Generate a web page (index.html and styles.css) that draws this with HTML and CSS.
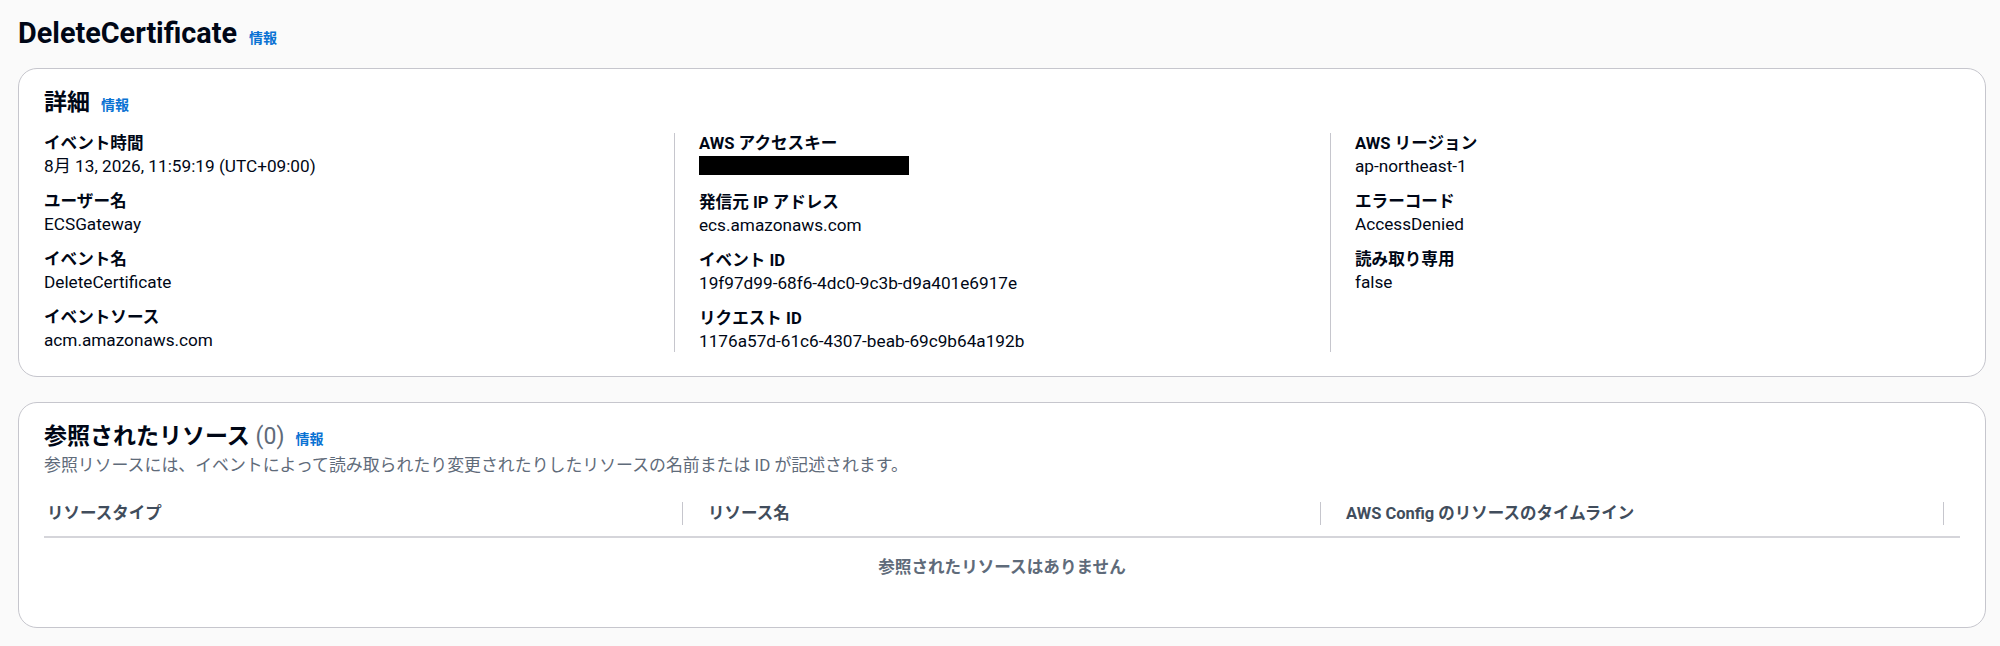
FILE: index.html
```html
<!DOCTYPE html>
<html lang="ja">
<head>
<meta charset="utf-8">
<title>DeleteCertificate</title>
<link rel="stylesheet" href="styles.css">
</head>
<body>
<div class="page">
  <div class="page-header">
    <h1 class="title">DeleteCertificate</h1>
    <a class="info" href="#">情報</a>
  </div>

  <section class="container details">
    <div class="container-header">
      <h2 class="heading">詳細</h2>
      <a class="info" href="#">情報</a>
    </div>
    <div class="columns">
      <div class="col">
        <div class="kv"><div class="label">イベント時間</div><div class="value">8月 13, 2026, 11:59:19 (UTC+09:00)</div></div>
        <div class="kv"><div class="label">ユーザー名</div><div class="value">ECSGateway</div></div>
        <div class="kv"><div class="label">イベント名</div><div class="value">DeleteCertificate</div></div>
        <div class="kv"><div class="label">イベントソース</div><div class="value">acm.amazonaws.com</div></div>
      </div>
      <div class="col divided">
        <div class="kv"><div class="label">AWS アクセスキー</div><div class="value"><span class="redacted"></span></div></div>
        <div class="kv"><div class="label">発信元 IP アドレス</div><div class="value">ecs.amazonaws.com</div></div>
        <div class="kv"><div class="label">イベント ID</div><div class="value">19f97d99-68f6-4dc0-9c3b-d9a401e6917e</div></div>
        <div class="kv"><div class="label">リクエスト ID</div><div class="value">1176a57d-61c6-4307-beab-69c9b64a192b</div></div>
      </div>
      <div class="col divided">
        <div class="kv"><div class="label">AWS リージョン</div><div class="value">ap-northeast-1</div></div>
        <div class="kv"><div class="label">エラーコード</div><div class="value">AccessDenied</div></div>
        <div class="kv"><div class="label">読み取り専用</div><div class="value">false</div></div>
      </div>
    </div>
  </section>

  <section class="container resources">
    <div class="container-header">
      <h2 class="heading">参照されたリソース <span class="count">(0)</span></h2>
      <a class="info" href="#">情報</a>
    </div>
    <p class="desc">参照リソースには、イベントによって読み取られたり変更されたりしたリソースの名前または ID が記述されます。</p>
    <div class="table">
      <div class="thead">
        <div class="th th-first">リソースタイプ</div>
        <div class="th th-mid">リソース名</div>
        <div class="th th-last">AWS Config のリソースのタイムライン</div>
      </div>
      <div class="empty">参照されたリソースはありません</div>
    </div>
  </section>
</div>
</body>
</html>
```

FILE: styles.css
```css
* { box-sizing: border-box; }

html, body {
  margin: 0;
  padding: 0;
  background: #fafafa;
}

body {
  font-family: Roboto, "Noto Sans CJK JP", sans-serif;
  color: #000716;
  font-size: 17px;
  line-height: 22px;
}

.page {
  padding: 15px 14px 0 18px;
}

.page-header {
  display: flex;
  align-items: baseline;
  gap: 12px;
  margin-bottom: 17px;
}

.title {
  margin: 0;
  font-size: 28.8px;
  line-height: 36px;
  font-weight: 700;
  color: #000716;
}

.info {
  font-size: 14px;
  font-weight: 700;
  color: #0972d3;
  text-decoration: none;
  line-height: 18px;
}

.container {
  background: #ffffff;
  border: 1px solid #c6c6cd;
  border-radius: 19px;
  padding: 20px 25px 24px 25px;
}

.resources {
  margin-top: 25px;
  padding-bottom: 25px;
}

.container-header {
  display: flex;
  align-items: baseline;
  gap: 11px;
}

.heading {
  margin: 0;
  font-size: 23px;
  line-height: 28px;
  font-weight: 700;
  color: #000716;
}

.count {
  font-weight: 400;
  color: #5f6b7a;
}

.columns {
  display: grid;
  grid-template-columns: 604px 630px 1fr;
  column-gap: 26px;
  margin-top: 16px;
}

.col.divided {
  border-left: 1px solid #c6c6cd;
  padding-left: 24px;
}

.kv + .kv {
  margin-top: 14px;
}

.label {
  font-weight: 700;
  font-size: 16.6px;
  line-height: 22px;
}

.value {
  font-size: 17.2px;
  line-height: 22px;
  height: 22px;
}

.redacted {
  display: block;
  width: 210px;
  height: 19px;
  margin-top: 1px;
  background: #000000;
}

.desc {
  margin: 3px 0 0 0;
  font-size: 16.9px;
  line-height: 22px;
  color: #5f6b7a;
}

.table {
  margin-top: 19px;
}

.thead {
  display: flex;
  padding: 7px 16px 11px 0;
  border-bottom: 2px solid #d5d5da;
}

.th {
  height: 23px;
  line-height: 23px;
  font-size: 16.5px;
  font-weight: 700;
  color: #414d5c;
}

.th-first {
  width: 638px;
  padding-left: 3px;
}

.th-mid {
  width: 638px;
  border-left: 1px solid #c6c6cd;
  padding-left: 25px;
}

.th-last {
  flex: 1;
  border-left: 1px solid #c6c6cd;
  border-right: 1px solid #c6c6cd;
  padding-left: 25px;
}

.empty {
  padding: 19px 0 23px 0;
  text-align: center;
  font-size: 16.6px;
  line-height: 22px;
  font-weight: 700;
  color: #5f6b7a;
}
```
